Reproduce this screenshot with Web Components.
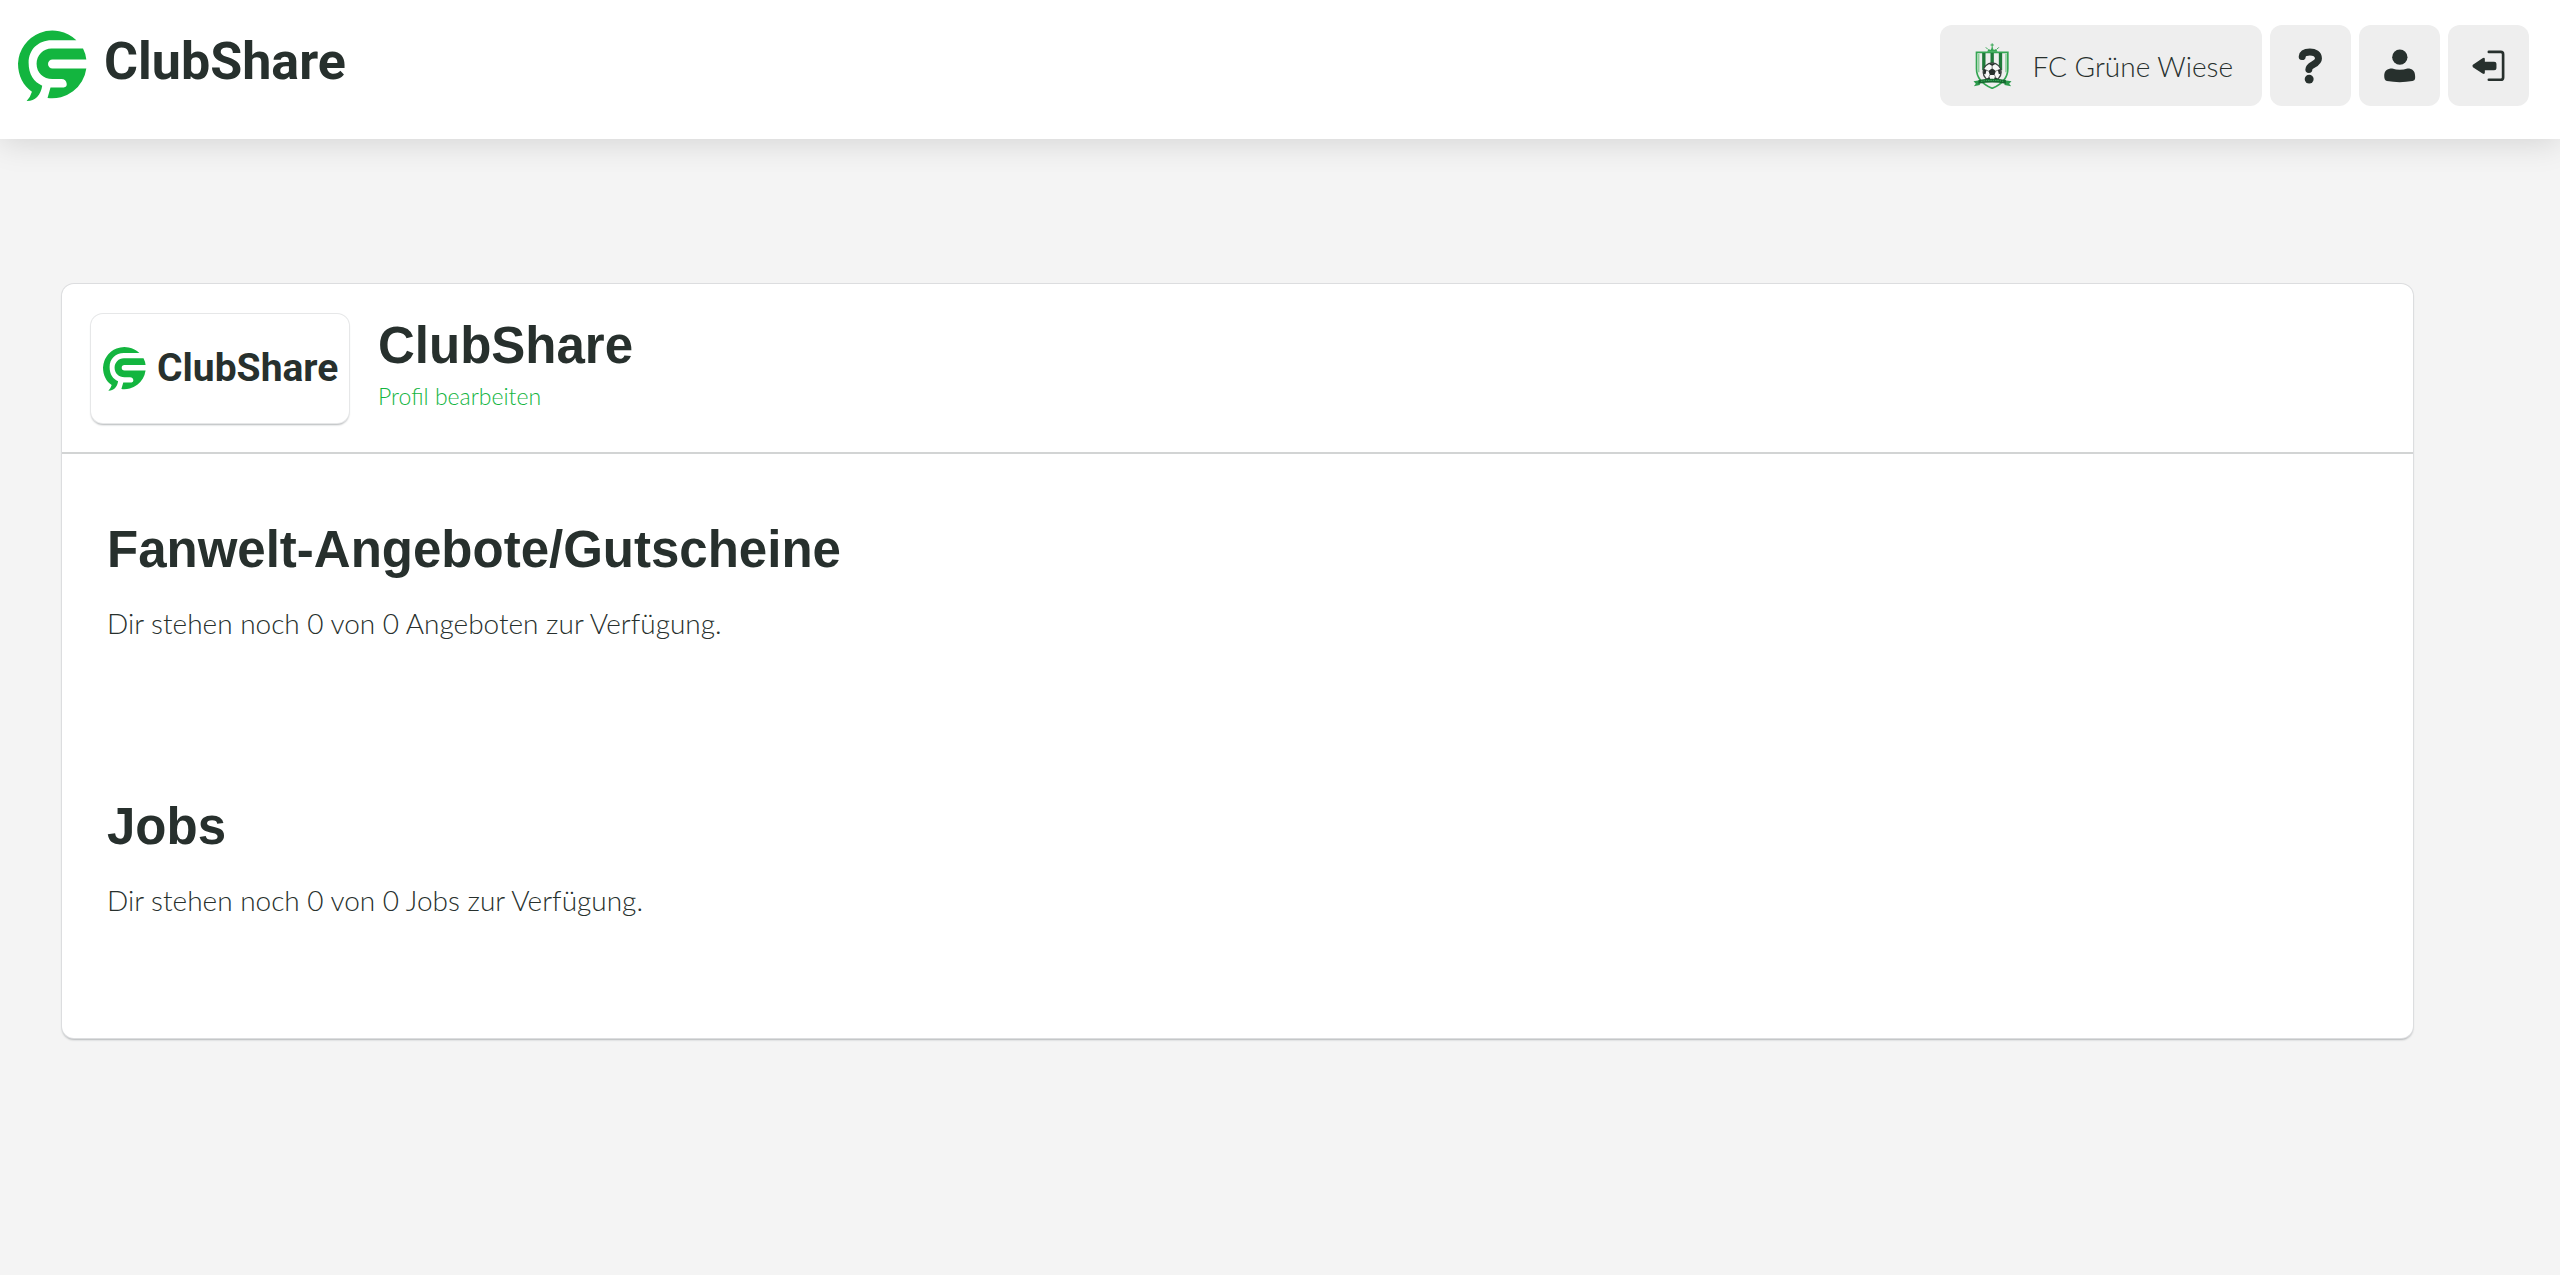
<!DOCTYPE html>
<html lang="de">
<head>
<meta charset="utf-8">
<title>ClubShare</title>
<style>
body{margin:0;background:#f4f4f4;color:#27302d;font:300 28px/40px Lato,"Liberation Sans",sans-serif}
</style>
</head>
<body>
<cs-app></cs-app>
<script>
const define = (name, html) => customElements.define(name, class extends HTMLElement {
  constructor(){
    super();
    const t = document.createElement('template');
    t.innerHTML = html;
    this.attachShadow({mode:'open'}).append(t.content.cloneNode(true));
  }
});

define('cs-logo', `
<style>
:host{display:flex;align-items:flex-start;gap:var(--logo-gap,17px);color:#27302d}
svg{width:var(--logo-mark,69px);flex:none;display:block}
span{font:700 var(--logo-size,52px)/var(--logo-line,66px) Roboto,"Liberation Sans",sans-serif}
</style>
<svg viewBox="54 88 208 220" fill="#13b53f" aria-hidden="true">
<path d="M230 122A104 104 0 0 0 54 192C54 228 70 260 96 277Q92 292 80 305C104 306 123 288 127 259C102 248 86 226 86 190C86 150 115 122 155 122Z"/>
<path d="M155 147H250Q258 162 260 180H158a13.500 13.500 0 0 0 0 27H260A104 104 0 0 1 143 296L152 264H192Q201 264 201 254Q199 239 185 239H158C130 239 110 220 110 193C110 167 130 147 155 147Z"/>
</svg>
<span>ClubShare</span>`);

define('cs-crest', `
<style>:host{display:block}svg{display:block;width:39px;height:46px}</style>
<svg viewBox="152 128 116 138" aria-hidden="true">
<path d="M162 156H256V205C256 238 232 254 209 264C186 254 162 238 162 205Z" fill="#eee" stroke="#35a653" stroke-width="5"/>
<path d="M179 158h10v52h-10zM204 158h10v34h-10zM229 158h10v52h-10z" fill="#1f7a3a"/>
<path d="M166 160h5v56h-5zM248 160h5v56h-5z" fill="#8fd09e"/>
<path d="M194 154L198 146L204 149L209 140L214 149L221 146L225 154Z" fill="#35a653"/>
<path d="M209 129v14M204 134h10M190 141l6 6M229 141l-6 6" stroke="#35a653" stroke-width="3"/>
<circle cx="209" cy="215" r="27" fill="#f8f8f8" stroke="#3c4240" stroke-width="4"/>
<path d="M209 204l11 8-4 12h-14l-4-12zM199 190h20l-10 7zM184 205l8 4-3 13-6-2zM234 205l-8 4 3 13 6-2zM192 235l9-5 3 9zM226 235l-9-5-3 9z" fill="#27302d"/>
<path d="M209 204v-8M220 212l8-3M216 224l4 8M202 224l-4 8M198 212l-8-3" stroke="#3c4240" stroke-width="2"/>
<path d="M153 243L172 240V254L154 258L160 250ZM267 243L246 240V254L266 258L260 250Z" fill="#2b9a4b"/>
<path d="M168 239Q209 232 250 239V250Q209 243 168 250Z" fill="#14682e"/>
<path d="M176 243Q209 237 242 243" fill="none" stroke="#49c269" stroke-width="3" stroke-dasharray="4 3"/>
</svg>`);

define('cs-button', `
<style>
:host{display:block}
button{display:flex;align-items:center;justify-content:center;gap:20px;box-sizing:border-box;min-width:81px;height:81px;margin:0;padding:0;border:0;border-radius:12px;background:#eee;color:inherit;font:inherit;cursor:pointer}
:host([wide]) button{padding:0 29px 0 33px}
</style>
<button type="button"><slot></slot></button>`);

define('cs-header', `
<style>
:host{display:block}
header{display:flex;justify-content:space-between;align-items:flex-start;box-sizing:border-box;height:139px;padding:25px 31px 0 18px;background:#fff;box-shadow:0 4px 30px rgba(0,0,0,.13)}
a{display:block;color:inherit;text-decoration:none;padding-top:4px}
nav{display:flex;gap:8px}
svg{display:block;width:81px;height:81px;fill:#27302d}
</style>
<header>
<a href="#" aria-label="ClubShare Startseite"><cs-logo></cs-logo></a>
<nav>
<cs-button wide><cs-crest></cs-crest><span>FC Grüne Wiese</span></cs-button>
<cs-button><svg viewBox="89 75 244 244" role="img" aria-label="Hilfe"><path d="M186 170C187 160 197 156 209 156C224 156 235 163 235 176C235 194 206 194 206 209" fill="none" stroke="#27302d" stroke-width="21" stroke-linecap="round"/><circle cx="207" cy="238" r="13.500"/></svg></cs-button>
<cs-button><svg viewBox="357 75 244 244" role="img" aria-label="Profil"><circle cx="480" cy="172" r="23"/><path d="M433 229C433 212 442 206 457 206Q480 214 503 206C518 206 526 214 526 229C527 240 524 243 518 244Q480 251 441 244Q433 243 433 229Z"/></svg></cs-button>
<cs-button><svg viewBox="625 75 244 244" role="img" aria-label="Abmelden"><path d="M700 195L729 175Q736 171 736 178V186H764Q771 186 771 192V205Q771 211 764 211H736V218Q736 225 729 221L700 202Q697 198 700 195Z"/><path d="M748 156H784Q791 156 791 163V233Q791 240 784 240H748" fill="none" stroke="#27302d" stroke-width="8" stroke-linecap="round"/></svg></cs-button>
</nav>
</header>`);

define('cs-profile', `
<style>
:host{display:flex;align-items:flex-start;gap:29px;padding:30px 29px 29px;border-bottom:2px solid #d2d4d4}
.tile{display:flex;box-sizing:border-box;width:258px;height:109px;padding:32px 12px 0;border-radius:12px;background:#fff;box-shadow:0 0 0 1px #e6e7e8,0 2px 2px 0 #b4b7b9;--logo-mark:43px;--logo-gap:11px;--logo-size:39px;--logo-line:44px}
h1{margin:0;font:700 51px/64px "Liberation Sans",Arial,sans-serif}
a{display:block;color:#13b53f;font-size:23px;line-height:36px;text-decoration:none}
</style>
<div class="tile"><cs-logo></cs-logo></div>
<div><h1><slot></slot></h1><a href="#">Profil bearbeiten</a></div>`);

define('cs-section', `
<style>
:host{display:block;height:auto}
h2{margin:0 0 21px;font:700 51px/64px "Liberation Sans",Arial,sans-serif}
p{margin:0}
</style>
<section><h2><slot name="title"></slot></h2><p><slot></slot></p></section>`);

define('cs-card', `
<style>
:host{display:block;background:#fff;border-radius:12px;box-shadow:0 0 0 1px #dcdddf,0 2px 2px 0 #b4b7b9}
.body{display:flex;flex-direction:column;gap:152px;padding:64px 45px 118px}
</style>
<slot name="head"></slot>
<div class="body"><slot></slot></div>`);

define('cs-app', `
<style>
:host{display:block}
main{padding:145px 147px 60px 62px}
</style>
<cs-header></cs-header>
<main>
<cs-card>
<cs-profile slot="head">ClubShare</cs-profile>
<cs-section><span slot="title">Fanwelt-Angebote/Gutscheine</span>Dir stehen noch 0 von 0 Angeboten zur Verfügung.</cs-section>
<cs-section><span slot="title">Jobs</span>Dir stehen noch 0 von 0 Jobs zur Verfügung.</cs-section>
</cs-card>
</main>`);
</script>
</body>
</html>
